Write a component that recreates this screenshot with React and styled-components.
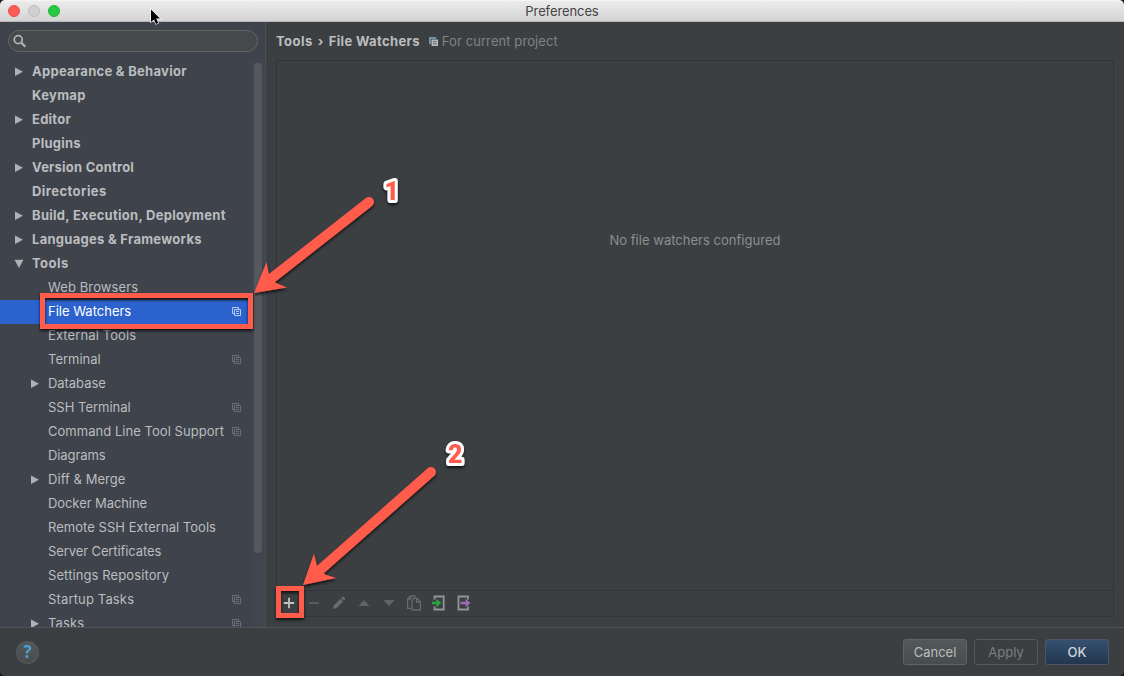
import React from "react";
import styled, { createGlobalStyle, css } from "styled-components";

const RED = "#ff5b4c";

const GlobalStyle = createGlobalStyle`
  *, *::before, *::after { box-sizing: border-box; }
  body {
    margin: 0;
    background: #17191a;
    overflow: hidden;
    font-family: Inter, "Liberation Sans", sans-serif;
    font-size: 13px;
    color: #bbbdbf;
  }
`;

const Window = styled.div`
  position: relative;
  display: flex;
  flex-direction: column;
  width: 1124px;
  height: 676px;
  overflow: hidden;
  background: #3c3f41;
  border-radius: 5px;
`;

const TitleBar = styled.header`
  display: flex;
  align-items: center;
  flex: none;
  height: 22px;
  padding: 0 8px;
  background: linear-gradient(#ececec, #d3d3d3);
  border-top: 1px solid #f4f4f4;
  border-bottom: 1px solid #b9b9b9;
`;

const Lights = styled.div`
  display: flex;
  gap: 8px;
  width: 100px;
`;

const Light = styled.span`
  width: 12px;
  height: 12px;
  border-radius: 50%;
  background: ${(p) => p.$color};
  border: 1px solid ${(p) => p.$edge};
`;

const Title = styled.h1`
  flex: 1;
  margin: 0 100px 0 0;
  text-align: center;
  font-size: 13px;
  font-weight: 400;
  line-height: 20px;
  letter-spacing: ${(p) => p.$spacing}px;
  color: #454545;
`;

const Body = styled.div`
  display: flex;
  flex: 1;
  min-height: 0;
`;

const Sidebar = styled.aside`
  display: flex;
  flex-direction: column;
  flex: none;
  width: 266px;
  padding-top: 8px;
  background: #3e434c;
  border-right: 1px solid #4b4e52;
`;

const SearchField = styled.div`
  display: flex;
  align-items: center;
  flex: none;
  width: 250px;
  height: 22px;
  margin-left: 8px;
  padding-left: 4px;
  background: #45494a;
  border: 1px solid #626567;
  border-radius: 11px;
`;

const TreeArea = styled.div`
  display: flex;
  flex: 1;
  min-height: 0;
  margin-top: 8px;
`;

const Tree = styled.ul`
  flex: 1;
  margin: 0;
  padding: 0;
  list-style: none;
  overflow: hidden;
`;

const TreeRow = styled.li`
  display: flex;
  align-items: center;
  height: 24px;
  padding-left: ${(p) => (p.$child ? 30 : 14)}px;
  padding-right: 10px;
  font-weight: ${(p) => (p.$child ? 400 : 700)};
  ${(p) =>
    p.$selected &&
    css`
      color: #fff;
      background: #2b62cd;
    `}
`;

const Disclosure = styled.span`
  display: flex;
  flex: none;
  width: 18px;
`;

const RowLabel = styled.span`
  flex: 1;
  line-height: 22px;
  padding-bottom: 2px;
  white-space: nowrap;
  letter-spacing: ${(p) => p.$spacing}px;
`;

const ProjectMark = styled.span`
  display: flex;
  flex: none;
  padding-bottom: 1px;
`;

const ScrollTrack = styled.div`
  flex: none;
  width: 14px;
  padding: 3px 0 0 3px;
  background: #40454e;
`;

const ScrollThumb = styled.div`
  width: 8px;
  height: 490px;
  border-radius: 4px;
  background: #55595d;
`;

const Main = styled.main`
  display: flex;
  flex-direction: column;
  flex: 1;
  padding: 0 10px 10px;
`;

const Breadcrumb = styled.div`
  display: flex;
  align-items: center;
  height: 38px;
  white-space: pre;
`;

const Crumb = styled.span`
  font-weight: 700;
  letter-spacing: ${(p) => p.$spacing}px;
`;

const CrumbArrow = styled.span`
  width: 16px;
  text-align: center;
  font-weight: 700;
`;

const Scope = styled.span`
  display: flex;
  align-items: center;
  gap: 4px;
  margin-left: 9px;
  color: #808284;
  letter-spacing: ${(p) => p.$spacing}px;
`;

const Panel = styled.section`
  display: flex;
  flex-direction: column;
  flex: 1;
  border: 1px solid #323537;
`;

const EmptyState = styled.div`
  flex: 1;
  padding-top: 168px;
  line-height: 22px;
  text-align: center;
  color: #8c8e90;
  letter-spacing: ${(p) => p.$spacing}px;
`;

const Toolbar = styled.div`
  display: flex;
  align-items: center;
  gap: 9px;
  height: 26px;
  padding: 0 0 1px 4px;
  border-top: 1px solid #323537;
`;

const ToolButton = styled.span`
  display: flex;
  width: 16px;
  height: 16px;
`;

const Footer = styled.footer`
  display: flex;
  align-items: center;
  flex: none;
  height: 49px;
  padding: 0 15px 0 16px;
  border-top: 1px solid #515355;
`;

const HelpButton = styled.span`
  display: flex;
  align-items: center;
  justify-content: center;
  width: 23px;
  height: 23px;
  margin-right: auto;
  border: 1px solid #5c5f61;
  border-radius: 50%;
  background: linear-gradient(#525759, #484c4e);
  color: #4c9fcd;
  font: 700 17px/20px "Open Sans", sans-serif;
`;

const variants = {
  normal: css`
    background: linear-gradient(#535859, #484d4f);
    border-color: #606365;
  `,
  disabled: css`
    color: #7c7e80;
    border-color: #56595b;
  `,
  primary: css`
    background: linear-gradient(#365070, #22374f);
    border-color: #4c5666;
    color: #d0d6dd;
    font-weight: 500;
  `,
};

const Button = styled.span`
  width: 64px;
  height: 26px;
  margin-left: 7px;
  border: 1px solid;
  border-radius: 3px;
  text-align: center;
  line-height: 24px;
  ${(p) => variants[p.$kind]}
`;

const Overlay = styled.svg`
  position: absolute;
  inset: 0;
  pointer-events: none;
`;

function Arrow({ open }) {
  return (
    <svg width="10" height="10" viewBox="0 0 10 10" fill="#afb1b3">
      <path d={open ? "M0.5 0.8H9.5L5 9Z" : "M1 0.6V9L9 4.8Z"} />
    </svg>
  );
}

function CopyIcon({ color }) {
  return (
    <svg width="9" height="9" viewBox="0 0 9 9" fill="none" stroke={color}>
      <path d="M2 6.5H0.5V0.5H6.5V2M2.5 2.5H8.5V8.5H2.5ZM4 4.5H7M4 6.5H7" />
    </svg>
  );
}

function ScopeIcon() {
  return (
    <svg width="9" height="9" viewBox="0 0 9 9" fill="none">
      <path d="M0 0H7V2H2V7H0Z" fill="#6b93a8" />
      <path d="M2.5 2.5H9V9H2.5Z" fill="#b5b9bc" />
      <path d="M4 4.7H7.6M4 6.8H7.6" stroke="#575c60" strokeWidth=".9" />
    </svg>
  );
}

const toolIcons = [
  <path d="M8 2.8V13.2M2.8 8H13.2" stroke="#c0c2c4" strokeWidth="1.8" />,
  <path d="M3 8H13" stroke="#606365" strokeWidth="1.6" />,
  <path d="M1.8 14L2.8 10.4L9.5 3.7L12.2 6.4L5.5 13.1ZM10.3 2.9L11.4 1.8Q12 1.4 12.6 1.9L14 3.3Q14.4 3.9 14 4.5L13 5.6Z" fill="#6a6d6f" />,
  <path d="M2.5 11L8 5L13.5 11Z" fill="#606365" />,
  <path d="M2.5 5H13.5L8 11Z" fill="#606365" />,
  <g fill="none" stroke="#67696b" strokeWidth="1.3">
    <path d="M5 13.4H1.6V4L4.6 1H8.8V2.5M4.6 1V4.2H1.6" />
    <path d="M6 15V5.5L8 3.3H11L14.4 6.7V15ZM10.6 3.3V7H14.4" />
  </g>,
  <>
    <path d="M3.5 4.5V1.5H12.7V14.5H3.5V11.5" fill="none" stroke="#929496" strokeWidth="1.8" />
    <path d="M1 6.8H5.3V3.8L10.3 8L5.3 12.2V9.2H1Z" fill="#27a545" />
  </>,
  <>
    <path d="M12 4.5V1.5H2.5V14.5H12V11.5" fill="none" stroke="#929496" strokeWidth="1.8" />
    <path d="M4.5 6.8H9.5V3.8L14.5 8L9.5 12.2V9.2H4.5Z" fill="#9d6ab5" />
  </>,
];

const rows = [
  { label: "Appearance & Behavior", arrow: "closed", spacing: 0.28 },
  { label: "Keymap", spacing: 0.32 },
  { label: "Editor", arrow: "closed", spacing: 0.25 },
  { label: "Plugins", spacing: 0.25 },
  { label: "Version Control", arrow: "closed", spacing: 0.22 },
  { label: "Directories", spacing: 0.45 },
  { label: "Build, Execution, Deployment", arrow: "closed", spacing: 0.28 },
  { label: "Languages & Frameworks", arrow: "closed", spacing: 0.28 },
  { label: "Tools", arrow: "open", spacing: 0.45 },
  { label: "Web Browsers", child: true, spacing: 0.1 },
  { label: "File Watchers", child: true, selected: true, project: true, spacing: 0 },
  { label: "External Tools", child: true, spacing: 0.1 },
  { label: "Terminal", child: true, project: true, spacing: 0 },
  { label: "Database", child: true, arrow: "closed", spacing: -0.05 },
  { label: "SSH Terminal", child: true, project: true, spacing: 0 },
  { label: "Command Line Tool Support", child: true, project: true, spacing: 0.04 },
  { label: "Diagrams", child: true, spacing: -0.1 },
  { label: "Diff & Merge", child: true, arrow: "closed", spacing: 0.05 },
  { label: "Docker Machine", child: true, spacing: -0.08 },
  { label: "Remote SSH External Tools", child: true, spacing: 0.04 },
  { label: "Server Certificates", child: true, spacing: -0.1 },
  { label: "Settings Repository", child: true, spacing: 0.1 },
  { label: "Startup Tasks", child: true, project: true, spacing: 0.15 },
  { label: "Tasks", child: true, arrow: "closed", project: true, spacing: 0.1 },
];

const CalloutNumber = styled.text`
  font: 900 25px Roboto, sans-serif;
  fill: ${RED};
  stroke: #fff;
  stroke-width: 6px;
  stroke-linejoin: round;
  paint-order: stroke;
`;

function Callouts() {
  return (
    <Overlay width="1124" height="676" viewBox="0 0 1124 676">
      <defs>
        <filter id="shadow" x="-10%" y="-10%" width="120%" height="120%">
          <feDropShadow dx="0" dy="2" stdDeviation="1.5" floodColor="#000" floodOpacity="0.75" />
        </filter>
      </defs>
      <g filter="url(#shadow)">
        <rect x="42.5" y="295.5" width="208" height="31" fill="none" stroke={RED} strokeWidth="5" />
        <rect x="278.5" y="588.5" width="23" height="27" fill="none" stroke={RED} strokeWidth="5" />
        <path d="M369 202L272 278" stroke={RED} strokeWidth="10" strokeLinecap="round" />
        <path d="M254 293L266.5 262L269 275L276 283L287 287.5Z" fill={RED} />
        <path d="M431 472L320 570" stroke={RED} strokeWidth="10" strokeLinecap="round" />
        <path d="M303 585L314 553.5L317 566L325 574.5L336 578Z" fill={RED} />
        <CalloutNumber x="384.5" y="200">1</CalloutNumber>
        <CalloutNumber x="448" y="463">2</CalloutNumber>
      </g>
      <path
        d="M151 9.5V22L154 19.4L156 24L158.2 23L156.2 18.6H160Z"
        fill="#000"
        stroke="#fff"
        strokeWidth="1.2"
        paintOrder="stroke"
      />
    </Overlay>
  );
}

export default function App() {
  return (
    <>
      <GlobalStyle />
      <Window>
        <TitleBar>
          <Lights>
            <Light $color="#fc5b57" $edge="#e2504c" />
            <Light $color="#d0d0d0" $edge="#bcbcbc" />
            <Light $color="#28c840" $edge="#24b039" />
          </Lights>
          <Title $spacing={-0.1}>Preferences</Title>
        </TitleBar>
        <Body>
          <Sidebar>
            <SearchField>
              <svg width="14" height="14" viewBox="0 0 14 14" fill="none" stroke="#afb1b3">
                <circle cx="5.2" cy="5.6" r="4" strokeWidth="1.8" />
                <path d="M8.2 8.6L12.3 12.7" strokeWidth="2.2" />
              </svg>
            </SearchField>
            <TreeArea>
              <Tree>
                {rows.map((r) => (
                  <TreeRow key={r.label} $child={r.child} $selected={r.selected}>
                    <Disclosure>{r.arrow && <Arrow open={r.arrow === "open"} />}</Disclosure>
                    <RowLabel $spacing={r.spacing}>{r.label}</RowLabel>
                    {r.project && (
                      <ProjectMark>
                        <CopyIcon color={r.selected ? "#b9cdf2" : "#6c7076"} />
                      </ProjectMark>
                    )}
                  </TreeRow>
                ))}
              </Tree>
              <ScrollTrack>
                <ScrollThumb />
              </ScrollTrack>
            </TreeArea>
          </Sidebar>
          <Main>
            <Breadcrumb>
              <Crumb $spacing={0.45}>Tools</Crumb>
              <CrumbArrow>›</CrumbArrow>
              <Crumb $spacing={0.36}>File Watchers</Crumb>
              <Scope $spacing={0.08}>
                <ScopeIcon />
                For current project
              </Scope>
            </Breadcrumb>
            <Panel>
              <EmptyState $spacing={0.02}>No file watchers configured</EmptyState>
              <Toolbar>
                {toolIcons.map((icon, i) => (
                  <ToolButton key={i}>
                    <svg width="16" height="16" viewBox="0 0 16 16">
                      {icon}
                    </svg>
                  </ToolButton>
                ))}
              </Toolbar>
            </Panel>
          </Main>
        </Body>
        <Footer>
          <HelpButton>?</HelpButton>
          <Button $kind="normal">Cancel</Button>
          <Button $kind="disabled">Apply</Button>
          <Button $kind="primary">OK</Button>
        </Footer>
        <Callouts />
      </Window>
    </>
  );
}
